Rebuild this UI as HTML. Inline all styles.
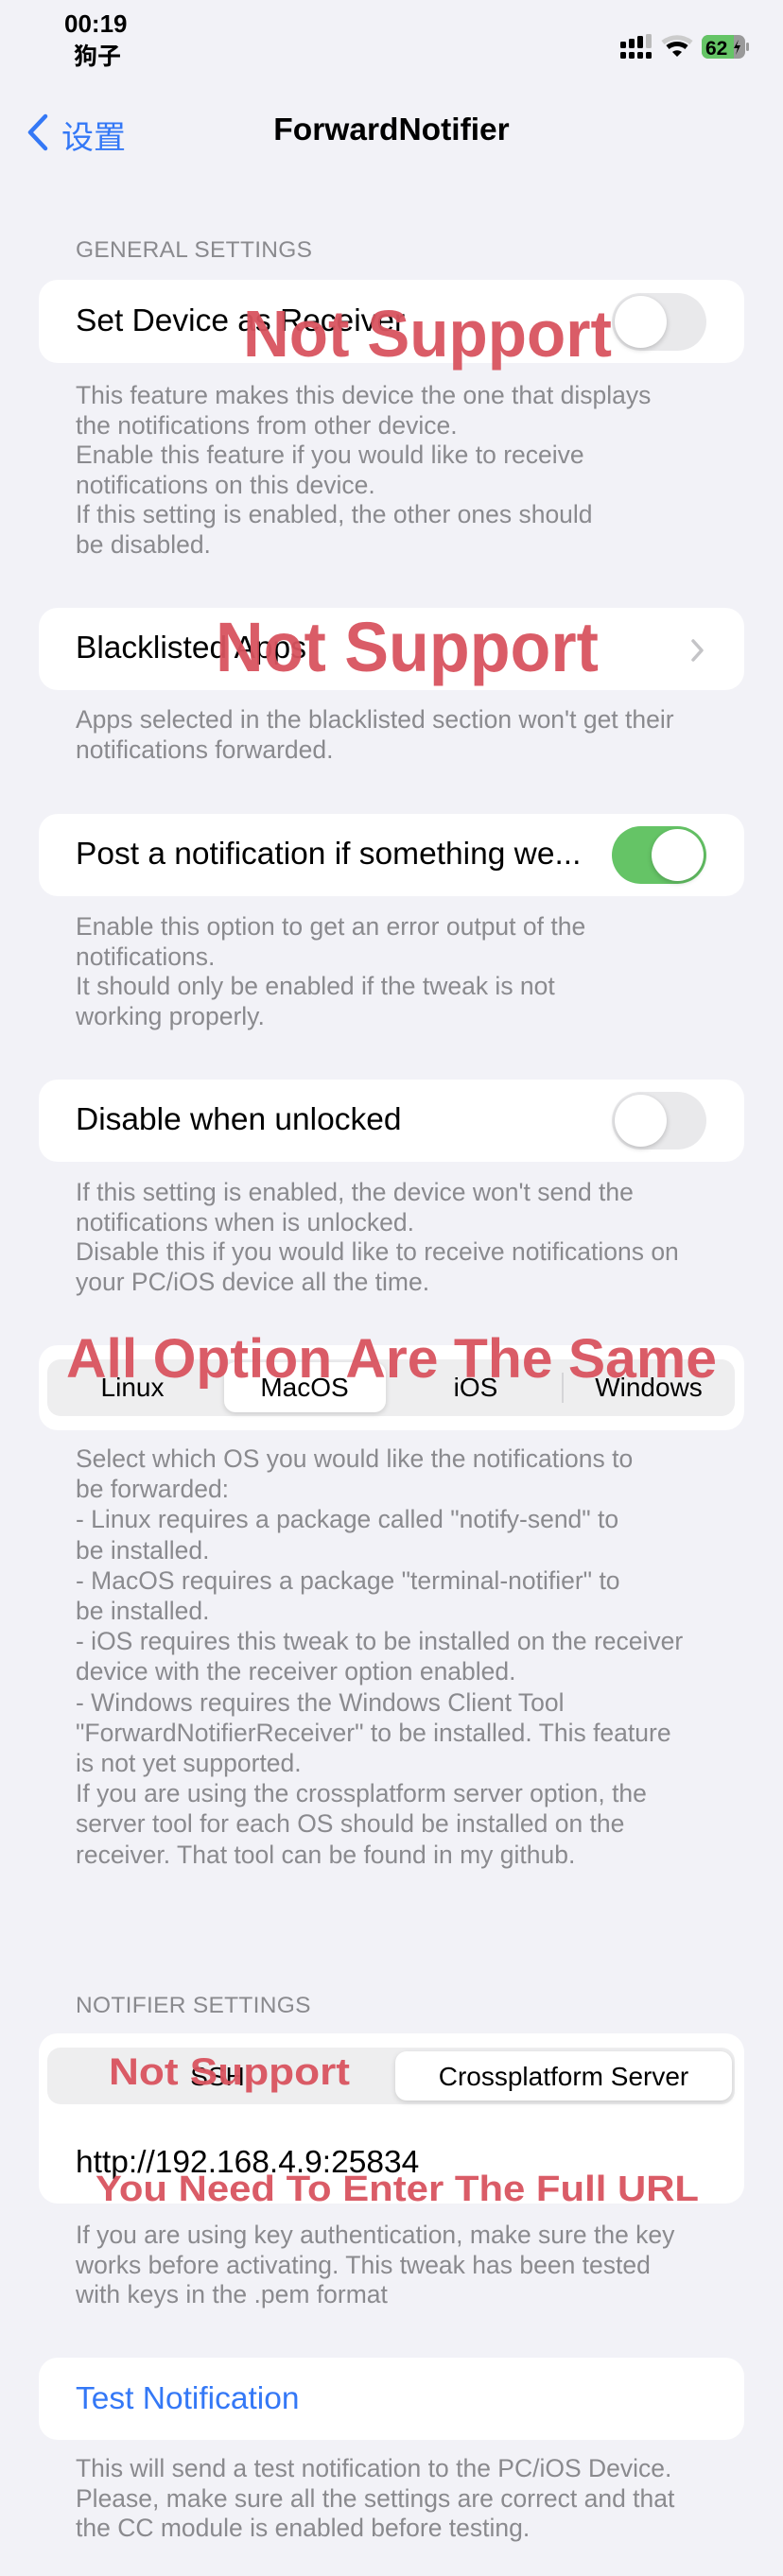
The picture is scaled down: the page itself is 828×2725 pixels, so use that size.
<!DOCTYPE html>
<html><head><meta charset="utf-8">
<style>
*{margin:0;padding:0;box-sizing:border-box}
body{width:828px;height:2725px;background:#f2f2f7;font-family:"Liberation Sans","Noto Sans CJK SC",sans-serif;position:relative;overflow:hidden;color:#000}
.a{position:absolute}
.card{position:absolute;left:41px;width:746px;background:#fff;border-radius:20px}
.row{position:absolute;left:80px;font-size:33.5px;white-space:nowrap}
.ft{position:absolute;left:80px;font-size:26.5px;line-height:31.5px;color:#8a8a8e;white-space:nowrap}
.hd{position:absolute;left:80px;font-size:24.5px;color:#8a8a8e;letter-spacing:0.3px}
.tg{position:absolute;left:647px;width:100px;height:61px;border-radius:31px;background:#e9e9eb}
.tg i{position:absolute;top:3px;left:3px;width:55px;height:55px;border-radius:50%;background:#fff;box-shadow:0 2px 6px rgba(0,0,0,.2)}
.tg.on{background:#65c466}
.tg.on i{left:42px}
.seg{position:absolute;background:#eeeeef;border-radius:14px}
.sel{position:absolute;background:#fff;border-radius:12px;box-shadow:0 2px 6px rgba(0,0,0,.15)}
.sl{position:absolute;font-size:28px;text-align:center;white-space:nowrap}
svg.ov{position:absolute;left:0;top:0;overflow:visible}
</style></head><body>

<div class="a" style="left:68px;top:10px;font-size:26px;font-weight:bold">00:19</div>
<div class="a" style="left:78px;top:40px;font-size:25px;font-weight:bold">狗子</div>
<svg class="a" style="left:654px;top:36px" width="140" height="30" viewBox="0 0 140 30">
<rect x="2" y="8" width="6" height="7" rx="1.5"/><rect x="11" y="5" width="6" height="10" rx="1.5"/><rect x="20" y="2" width="6" height="13" rx="1.5"/><rect x="29" y="0" width="6" height="15" rx="1.5" fill="#bbb"/>
<rect x="2" y="19" width="6" height="7" rx="1.5"/><rect x="11" y="19" width="6" height="7" rx="1.5"/><rect x="20" y="19" width="6" height="7" rx="1.5"/><rect x="29" y="19" width="6" height="7" rx="1.5"/>
<path d="M47 9 A24 24 0 0 1 77 9" stroke="#ccc" stroke-width="5" fill="none"/>
<path d="M52 14 A16 16 0 0 1 72 14" stroke="#000" stroke-width="5" fill="none"/>
<path d="M57 19 L62 24 L67 19 A8 8 0 0 0 57 19Z"/>
<rect x="88" y="1" width="46" height="25" rx="7" fill="#9a9a9a"/>
<path d="M95 1 H122 V26 H95 A7 7 0 0 1 88 19 V8 A7 7 0 0 1 95 1Z" fill="#65c466"/>
<rect x="135" y="9" width="3" height="9" rx="1.5" fill="#9a9a9a"/>
<text x="92" y="22" font-size="21" font-weight="bold" font-family="Liberation Sans">62</text>
<path d="M127 6 L122 15 H126 L124 22 L129 12 H125Z" fill="#000"/>
</svg>

<svg class="a" style="left:24px;top:120px" width="30" height="40"><path d="M24 3 L8 20 L24 37" stroke="#3478f6" stroke-width="4.5" fill="none" stroke-linecap="round" stroke-linejoin="round"/></svg>
<div class="a" style="left:65px;top:118px;font-size:34px;color:#3478f6">设置</div>
<div class="a" style="left:0;width:828px;top:119px;text-align:center;font-size:33.5px;font-weight:bold">ForwardNotifier</div>

<div class="hd" style="top:251px">GENERAL SETTINGS</div>

<div class="card" style="top:296px;height:88px"></div>
<div class="row" style="top:321px">Set Device as Receiver</div>
<div class="tg" style="top:310px"><i></i></div>
<div class="ft" style="top:403px">This feature makes this device the one that displays<br>the notifications from other device.<br>Enable this feature if you would like to receive<br>notifications on this device.<br>If this setting is enabled, the other ones should<br>be disabled.</div>

<div class="card" style="top:643px;height:87px"></div>
<div class="row" style="top:667px">Blacklisted Apps</div>
<svg class="a" style="left:728px;top:674px" width="20" height="28"><path d="M5 4 L14 14 L5 24" stroke="#c4c4c7" stroke-width="3.5" fill="none" stroke-linecap="round" stroke-linejoin="round"/></svg>
<div class="ft" style="top:746px">Apps selected in the blacklisted section won't get their<br>notifications forwarded.</div>

<div class="card" style="top:861px;height:87px"></div>
<div class="row" style="top:885px">Post a notification if something we...</div>
<div class="tg on" style="top:874px"><i></i></div>
<div class="ft" style="top:965px">Enable this option to get an error output of the<br>notifications.<br>It should only be enabled if the tweak is not<br>working properly.</div>

<div class="card" style="top:1142px;height:87px"></div>
<div class="row" style="top:1166px">Disable when unlocked</div>
<div class="tg" style="top:1155px"><i></i></div>
<div class="ft" style="top:1246px">If this setting is enabled, the device won't send the<br>notifications when is unlocked.<br>Disable this if you would like to receive notifications on<br>your PC/iOS device all the time.</div>

<div class="card" style="top:1423px;height:90px"></div>
<div class="seg" style="left:50px;top:1438px;width:727px;height:60px"></div>
<div class="sel" style="left:237px;top:1441px;width:171px;height:53px"></div>
<div class="a" style="left:594px;top:1452px;width:2px;height:32px;background:#d5d5d8"></div>
<div class="sl" style="left:80px;width:120px;top:1452px">Linux</div>
<div class="sl" style="left:262px;width:120px;top:1452px">MacOS</div>
<div class="sl" style="left:443px;width:120px;top:1452px">iOS</div>
<div class="sl" style="left:616px;width:140px;top:1452px">Windows</div>
<div class="ft" style="top:1527px;line-height:32.2px">Select which OS you would like the notifications to<br>be forwarded:<br>- Linux requires a package called "notify-send" to<br>be installed.<br>- MacOS requires a package "terminal-notifier" to<br>be installed.<br>- iOS requires this tweak to be installed on the receiver<br>device with the receiver option enabled.<br>- Windows requires the Windows Client Tool<br>"ForwardNotifierReceiver" to be installed. This feature<br>is not yet supported.<br>If you are using the crossplatform server option, the<br>server tool for each OS should be installed on the<br>receiver. That tool can be found in my github.</div>

<div class="hd" style="top:2108px">NOTIFIER SETTINGS</div>

<div class="card" style="top:2151px;height:180px"></div>
<div class="seg" style="left:50px;top:2166px;width:727px;height:60px"></div>
<div class="sel" style="left:418px;top:2170px;width:356px;height:52px"></div>
<div class="sl" style="left:170px;width:120px;top:2181px">SSH</div>
<div class="sl" style="left:418px;width:356px;top:2181px">Crossplatform Server</div>
<div class="row" style="top:2269px">http://192.168.4.9:25834</div>
<div class="ft" style="top:2349px">If you are using key authentication, make sure the key<br>works before activating. This tweak has been tested<br>with keys in the .pem format</div>

<div class="card" style="top:2494px;height:87px"></div>
<div class="row" style="top:2519px;color:#3478f6">Test Notification</div>
<div class="ft" style="top:2596px">This will send a test notification to the PC/iOS Device.<br>Please, make sure all the settings are correct and that<br>the CC module is enabled before testing.</div>

<svg class="ov" width="828" height="2725">
<g fill="#d9545f" font-family="Liberation Sans" font-weight="bold" opacity="0.95">
<text x="257" y="377" font-size="70" textLength="390" lengthAdjust="spacingAndGlyphs">Not Support</text>
<text x="228" y="710" font-size="74" textLength="405" lengthAdjust="spacingAndGlyphs">Not Support</text>
<text x="70" y="1457" font-size="58" textLength="688" lengthAdjust="spacingAndGlyphs">All Option Are The Same</text>
<text x="115" y="2205" font-size="40" textLength="255" lengthAdjust="spacingAndGlyphs">Not Support</text>
<text x="101" y="2328" font-size="38" textLength="638" lengthAdjust="spacingAndGlyphs">You Need To Enter The Full URL</text>
</g>
</svg>
</body></html>
